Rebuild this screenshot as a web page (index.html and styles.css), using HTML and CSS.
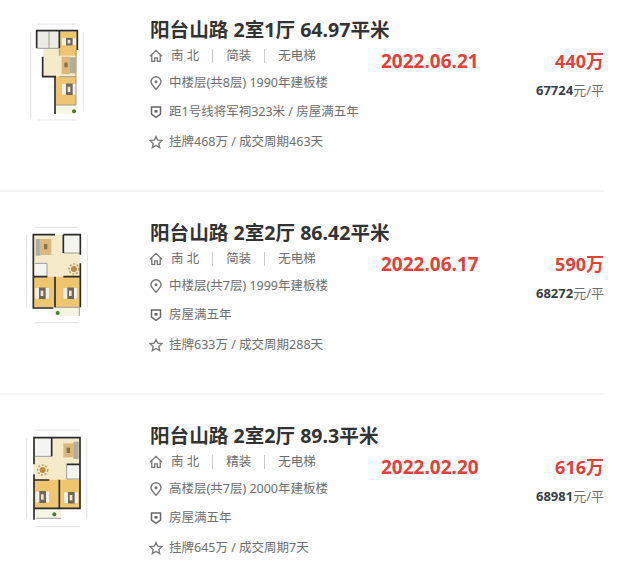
FILE: index.html
```html
<!DOCTYPE html>
<html lang="en">
  <head>
    <meta charset="UTF-8" />
    <title>成交记录</title>
    <link rel="stylesheet" href="styles.css">
  </head>
  <body>
    <svg class="defs" width="0" height="0">
      <symbol id="i-house" viewBox="0 0 14 14">
        <path d="M1 7.200 7 1.400l6 5.800M2.800 6v6.400h2.900V8.800h2.600v3.600h2.900V6" fill="none" stroke="#777" stroke-width="1.300"/>
      </symbol>
      <symbol id="i-pin" viewBox="0 0 14 14">
        <path d="M7 13.200C4.200 10.200 2 8 2 5.700a5 5 0 0 1 10 0C12 8 9.800 10.200 7 13.200Z" fill="none" stroke="#777" stroke-width="1.400"/>
        <circle cx="7" cy="5.700" r="1.500" fill="#777"/>
      </symbol>
      <symbol id="i-shield" viewBox="0 0 14 14">
        <path d="M2.500 2h9v7.200L7 12.400 2.500 9.200Z" fill="none" stroke="#666" stroke-width="1.500"/>
        <rect x="5.500" y="5" width="3" height="2.600" fill="#666"/>
      </symbol>
      <symbol id="i-star" viewBox="0 0 14 14">
        <path d="M7 1.400 8.700 5.200l4.300.4-3.200 2.800.9 4.200L7 10.400l-3.700 2.200.9-4.200L1 5.600l4.300-.4Z" fill="none" stroke="#777" stroke-width="1.300"/>
      </symbol>
      <symbol id="bed" viewBox="0 0 42 36" preserveAspectRatio="none">
        <rect width="42" height="32" y="2" fill="#f3efe6"/>
        <rect x="12" width="20" height="36" fill="#6f685a"/>
        <rect x="17" y="10" width="8" height="16" fill="#efe7d4"/>
      </symbol>
    </svg>

    <ul class="deal-list">
      <li class="deal">
        <svg class="plan" viewBox="0 0 330 390">
          <path class="dims" d="M112 72h118M112 360h118M92 95v260M250 95v240"/>
          <rect x="112" y="95" width="66" height="50" fill="#ecebe6"/>
          <rect x="130" y="145" width="100" height="85" fill="#f5ebcb"/>
          <rect x="178" y="95" width="52" height="72" fill="#efc670"/>
          <rect x="168" y="230" width="60" height="85" fill="#efc670"/>
          <rect x="168" y="315" width="58" height="26" fill="#f5f5e6"/>
          <rect x="185" y="170" width="25" height="52" fill="#dcb77c"/>
          <rect x="193" y="188" width="10" height="14" fill="#8a7440"/>
          <rect x="210" y="172" width="17" height="48" fill="#b3ae9c"/>
          <use href="#bed" x="186" y="113" width="42" height="24"/>
          <use href="#bed" x="186" y="250" width="42" height="36"/>
          <circle cx="222" cy="334" r="6" fill="#4c7a2d"/>
          <path class="wall-thin" d="M147 95v50M112 145h66v22M178 230h50M228 150v165M168 315h60"/>
          <path class="wall" d="M110 145V92h122v58M178 92v52M128 170v60h40M165 230v112"/>
        </svg>
        <div class="info">
          <h2 class="title">阳台山路 2室1厅 64.97平米</h2>
          <div class="row row-house">
            <svg class="icon"><use href="#i-house"/></svg>
            <span class="facts"><span>南 北</span><i></i><span>简装</span><i></i><span>无电梯</span></span>
          </div>
          <div class="row row-floor">
            <svg class="icon"><use href="#i-pin"/></svg>
            <span>中楼层(共8层) 1990年建板楼</span>
          </div>
          <div class="row row-tag">
            <svg class="icon"><use href="#i-shield"/></svg>
            <span>距1号线将军祠323米 / 房屋满五年</span>
          </div>
          <div class="row row-deal">
            <svg class="icon"><use href="#i-star"/></svg>
            <span>挂牌468万 / 成交周期463天</span>
          </div>
        </div>
        <div class="date">2022.06.21</div>
        <div class="price">
          <div class="total">440万</div>
          <div class="unit"><b>67724</b>元/平</div>
        </div>
      </li>

      <li class="deal">
        <svg class="plan" viewBox="0 -51 330 390">
          <path class="dims" d="M105 22h130M105 308h130M80 45v220M262 45v220"/>
          <rect x="100" y="45" width="140" height="125" fill="#f5ebcb"/>
          <rect x="190" y="47" width="50" height="52" fill="#f4f4f0"/>
          <rect x="105" y="130" width="36" height="40" fill="#f4f4f0"/>
          <rect x="100" y="170" width="65" height="92" fill="#efc670"/>
          <rect x="165" y="170" width="75" height="92" fill="#efc670"/>
          <rect x="163" y="262" width="75" height="26" fill="#f5f5e6"/>
          <rect x="122" y="57" width="32" height="48" fill="#dcb77c"/>
          <rect x="132" y="72" width="10" height="16" fill="#8a7440"/>
          <rect x="107" y="57" width="15" height="50" fill="#b3ae9c"/>
          <use href="#bed" x="105" y="202" width="42" height="36"/>
          <use href="#bed" x="190" y="202" width="42" height="36"/>
          <circle cx="222" cy="147" r="9" fill="#b58a4a"/>
          <circle cx="222" cy="147" r="15" fill="none" stroke="#c9a25f" stroke-width="5" stroke-dasharray="6 5"/>
          <circle cx="173" cy="279" r="6" fill="#4c7a2d"/>
          <path class="wall-thin" d="M190 99h50M105 130h36v40M165 262h73v26"/>
          <path class="wall" d="M165 44h-65v220h60M190 44h51v60M241 130v132M190 44v55M100 170h42M165 170v92M190 170h51"/>
        </svg>
        <div class="info">
          <h2 class="title">阳台山路 2室2厅 86.42平米</h2>
          <div class="row row-house">
            <svg class="icon"><use href="#i-house"/></svg>
            <span class="facts"><span>南 北</span><i></i><span>简装</span><i></i><span>无电梯</span></span>
          </div>
          <div class="row row-floor">
            <svg class="icon"><use href="#i-pin"/></svg>
            <span>中楼层(共7层) 1999年建板楼</span>
          </div>
          <div class="row row-tag">
            <svg class="icon"><use href="#i-shield"/></svg>
            <span>房屋满五年</span>
          </div>
          <div class="row row-deal">
            <svg class="icon"><use href="#i-star"/></svg>
            <span>挂牌633万 / 成交周期288天</span>
          </div>
        </div>
        <div class="date">2022.06.17</div>
        <div class="price">
          <div class="total">590万</div>
          <div class="unit"><b>68272</b>元/平</div>
        </div>
      </li>

      <li class="deal">
        <svg class="plan" viewBox="0 -57 330 390">
          <path class="dims" d="M105 15h135M105 305h135M80 40v240M260 40v240"/>
          <rect x="100" y="40" width="140" height="125" fill="#f5ebcb"/>
          <rect x="105" y="42" width="48" height="52" fill="#f4f4f0"/>
          <rect x="200" y="120" width="40" height="42" fill="#f4f4f0"/>
          <rect x="103" y="164" width="75" height="85" fill="#efc670"/>
          <rect x="180" y="164" width="60" height="85" fill="#efc670"/>
          <rect x="108" y="252" width="75" height="28" fill="#f5f5e6"/>
          <rect x="190" y="55" width="30" height="42" fill="#dcb77c"/>
          <rect x="200" y="68" width="10" height="16" fill="#8a7440"/>
          <rect x="220" y="50" width="16" height="52" fill="#b3ae9c"/>
          <use href="#bed" x="106" y="198" width="42" height="36"/>
          <use href="#bed" x="192" y="200" width="42" height="36"/>
          <circle cx="128" cy="135" r="9" fill="#b58a4a"/>
          <circle cx="128" cy="135" r="15" fill="none" stroke="#c9a25f" stroke-width="5" stroke-dasharray="6 5"/>
          <circle cx="163" cy="268" r="6" fill="#4c7a2d"/>
          <path class="wall-thin" d="M105 94h50M200 120v42h40M108 280h75"/>
          <path class="wall" d="M102 118V38h138v212h-62v-86M102 148v136M102 250h76M102 165h46M155 38v56M200 118h40"/>
        </svg>
        <div class="info">
          <h2 class="title">阳台山路 2室2厅 89.3平米</h2>
          <div class="row row-house">
            <svg class="icon"><use href="#i-house"/></svg>
            <span class="facts"><span>南 北</span><i></i><span>精装</span><i></i><span>无电梯</span></span>
          </div>
          <div class="row row-floor">
            <svg class="icon"><use href="#i-pin"/></svg>
            <span>高楼层(共7层) 2000年建板楼</span>
          </div>
          <div class="row row-tag">
            <svg class="icon"><use href="#i-shield"/></svg>
            <span>房屋满五年</span>
          </div>
          <div class="row row-deal">
            <svg class="icon"><use href="#i-star"/></svg>
            <span>挂牌645万 / 成交周期7天</span>
          </div>
        </div>
        <div class="date">2022.02.20</div>
        <div class="price">
          <div class="total">616万</div>
          <div class="unit"><b>68981</b>元/平</div>
        </div>
      </li>
    </ul>
  </body>
</html>
```

FILE: styles.css
```css
body {
  margin: 0;
  background-color: #fff;
  color: #6e6e6e;
  font-family: "Noto Sans", "Noto Sans CJK SC", sans-serif;
  font-size: 12.5px;
}

.defs {
  display: block;
}

.deal-list {
  list-style: none;
  margin: 0;
  padding: 0 21px 0 0;
}

.deal {
  display: flex;
  height: 190px;
  margin-bottom: 11px;
  border-bottom: 2px solid #f4f4f4;
}

.deal:last-child {
  height: 157px;
  margin-bottom: 0;
  border-bottom: 0;
}

.plan {
  flex: none;
  width: 110px;
  height: 130px;
  margin-right: 40px;
  filter: blur(0.5px);
}

.dims {
  fill: none;
  stroke: #d4d4d4;
  stroke-width: 2;
}

.wall {
  fill: none;
  stroke: #2a2a2a;
  stroke-width: 5;
}

.wall-thin {
  fill: none;
  stroke: #8d8d88;
  stroke-width: 2.500;
}

.info {
  flex: none;
  width: 231px;
  padding-top: 17px;
}

.title {
  margin: 0 0 4px;
  color: #333;
  font-size: 19.600px;
  font-weight: 700;
  line-height: 26px;
  white-space: nowrap;
}

.row {
  display: flex;
  align-items: center;
  height: 18px;
  line-height: 18px;
  white-space: nowrap;
}

.row-floor {
  margin-top: 9px;
}

.row-tag {
  margin-top: 11px;
}

.row-deal {
  margin-top: 12px;
}

.icon {
  flex: none;
  width: 14px;
  height: 14px;
  margin: 0 6px 0 -1px;
}

.row-house .icon {
  margin-right: 8px;
}

.facts {
  display: flex;
  align-items: center;
}

.facts i {
  width: 1px;
  height: 14px;
  margin: 0 13px;
  background-color: #ccc;
}

.date {
  flex: none;
  width: 120px;
  padding-top: 49px;
  color: #e2413b;
  font-size: 19px;
  font-weight: 700;
  line-height: 24px;
  white-space: nowrap;
}

.price {
  flex: 1;
  padding-top: 49px;
  text-align: right;
}

.total {
  color: #e2413b;
  font-size: 18px;
  font-weight: 700;
  line-height: 24px;
}

.unit {
  margin-top: 8px;
  font-size: 13px;
  line-height: 18px;
}

.unit b {
  color: #394043;
}
```
